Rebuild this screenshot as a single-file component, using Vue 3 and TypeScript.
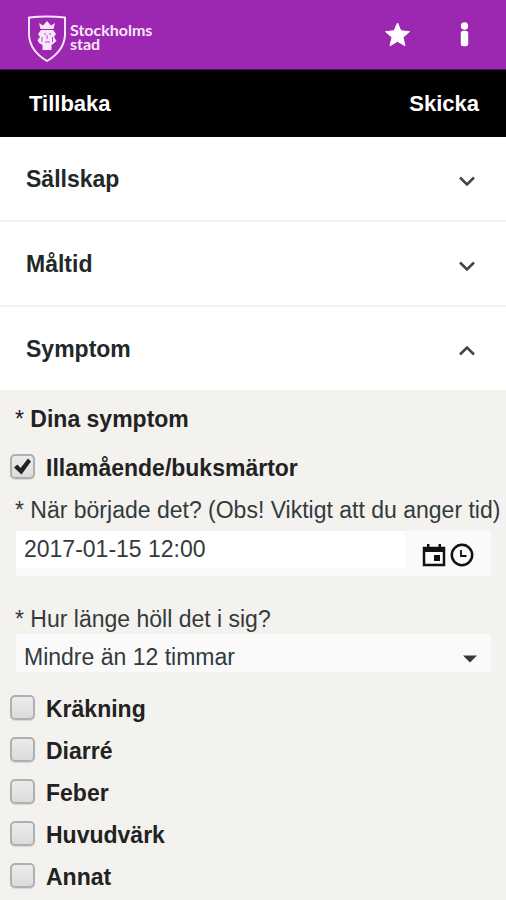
<script setup lang="ts">
import { reactive, ref } from 'vue'

interface Section {
  id: string
  title: string
  open: boolean
}

interface Symptom {
  id: string
  label: string
  checked: boolean
}

const sections: Section[] = [
  { id: 'company', title: 'Sällskap', open: false },
  { id: 'meal', title: 'Måltid', open: false },
  { id: 'symptom', title: 'Symptom', open: true },
]

const nausea = reactive<Symptom>({ id: 'nausea', label: 'Illamående/buksmärtor', checked: true })

const otherSymptoms = reactive<Symptom[]>([
  { id: 'vomiting', label: 'Kräkning', checked: false },
  { id: 'diarrhoea', label: 'Diarré', checked: false },
  { id: 'fever', label: 'Feber', checked: false },
  { id: 'headache', label: 'Huvudvärk', checked: false },
  { id: 'other', label: 'Annat', checked: false },
])

const startedAt = ref('2017-01-15 12:00')
const duration = ref('Mindre än 12 timmar')
</script>

<template>
  <div class="page">
    <header class="brand-bar">
      <a href="#" class="brand">
        <svg class="shield" viewBox="0 0 40 48" aria-hidden="true">
          <path d="M2 2.500 Q20 0.500 38 2.500 V20 Q37 36 20 46 Q3 36 2 20 Z" fill="none" stroke="currentColor" stroke-width="2" stroke-linejoin="round" />
          <path d="M12 8 L16 10.500 L20 6 L24 10.500 L28 8 L26.500 14 H13.500 Z" fill="currentColor" />
          <path d="M14 15 H26 L29 19 L27 22 L29.500 26 L26 29 L24.500 30 V35 H15.500 V30 L12 28 L10.500 25 L13 22 L11 19 Z" fill="currentColor" />
          <path d="M17 19 H19 M22 19 H24 M20 20 V24 M18 27 H23 M15 22 V27 M25.500 22 V27" fill="none" stroke="#9c27b0" stroke-width="0.800" />
        </svg>
        <span class="wordmark"><span>Stockholms</span><span>stad</span></span>
      </a>
      <nav class="brand-actions">
        <button type="button" class="icon-button" aria-label="Favoriter">
          <svg viewBox="0 0 28 28" width="28" height="28" aria-hidden="true">
            <path d="M14.500 2 L17.900 9.800 L26.500 10.600 L20 16.300 L22 24.800 L14.500 20.300 L7 24.800 L9 16.300 L2.500 10.600 L11.100 9.800 Z" fill="currentColor" stroke="currentColor" stroke-linejoin="round" />
          </svg>
        </button>
        <button type="button" class="icon-button" aria-label="Information">
          <svg viewBox="0 0 28 28" width="28" height="28" aria-hidden="true">
            <circle cx="14.500" cy="5" r="3.700" fill="currentColor" />
            <rect x="10.800" y="9.700" width="7.400" height="15.500" rx="2.500" fill="currentColor" />
          </svg>
        </button>
      </nav>
    </header>

    <div class="action-bar">
      <button type="button">Tillbaka</button>
      <button type="button">Skicka</button>
    </div>

    <main>
      <h2 v-for="section in sections" :key="section.id" class="section-heading">
        <button type="button" class="section-toggle" :aria-expanded="section.open">
          <span>{{ section.title }}</span>
          <svg viewBox="0 0 18 12" width="18" height="12" aria-hidden="true">
            <path :d="section.open ? 'M2 9.500 L9 2.500 L16 9.500' : 'M2 2.500 L9 9.500 L16 2.500'" fill="none" stroke="currentColor" stroke-width="2.500" />
          </svg>
        </button>
      </h2>

      <form class="panel" @submit.prevent>
        <h3 class="panel-title"><span class="star">*</span> Dina symptom</h3>

        <label class="check-row" :for="nausea.id">
          <span class="check-box">
            <input :id="nausea.id" v-model="nausea.checked" type="checkbox" />
            <svg viewBox="0 0 25 25" aria-hidden="true">
              <path d="M4 13.500 L7.500 10.500 L10.500 14 L18 4.500 L21 7.500 L11.500 20.500 Z" fill="currentColor" />
            </svg>
          </span>
          <span>{{ nausea.label }}</span>
        </label>

        <div class="field">
          <label for="started-at">* När började det? (Obs! Viktigt att du anger tid)</label>
          <div class="date-box">
            <input id="started-at" v-model="startedAt" type="text" />
            <button type="button" aria-label="Välj datum">
              <svg viewBox="0 0 24 24" width="24" height="24" aria-hidden="true">
                <path d="M2 5 H22 V22 H2 Z" fill="none" stroke="currentColor" stroke-width="2.500" />
                <path d="M1 4 H23 V9 H1 Z M5 1 H7.500 V5 H5 Z M16.500 1 H19 V5 H16.500 Z M12 12 H18 V18 H12 Z" fill="currentColor" />
              </svg>
            </button>
            <button type="button" aria-label="Välj tid">
              <svg viewBox="0 0 24 24" width="24" height="24" aria-hidden="true">
                <circle cx="12" cy="12" r="10.200" fill="none" stroke="currentColor" stroke-width="2.500" />
                <path d="M11 7 V13 H16.500" fill="none" stroke="currentColor" stroke-width="1.800" />
              </svg>
            </button>
          </div>
        </div>

        <div class="field duration">
          <label for="duration">* Hur länge höll det i sig?</label>
          <div class="select-box">
            <select id="duration" v-model="duration">
              <option>Mindre än 12 timmar</option>
            </select>
            <svg viewBox="0 0 14 8" width="14" height="8" aria-hidden="true">
              <path d="M0 0.500 H14 L7 7.500 Z" fill="currentColor" />
            </svg>
          </div>
        </div>

        <label v-for="symptom in otherSymptoms" :key="symptom.id" class="check-row" :for="symptom.id">
          <span class="check-box">
            <input :id="symptom.id" v-model="symptom.checked" type="checkbox" />
            <svg viewBox="0 0 25 25" aria-hidden="true">
              <path d="M4 13.500 L7.500 10.500 L10.500 14 L18 4.500 L21 7.500 L11.500 20.500 Z" fill="currentColor" />
            </svg>
          </span>
          <span>{{ symptom.label }}</span>
        </label>
      </form>
    </main>
  </div>
</template>

<style>
body {
  background: #f3f2ee;
}
</style>

<style scoped>
.page {
  font-family: "Liberation Sans", Arial, sans-serif;
  font-size: 23px;
  line-height: 28px;
  color: #222829;
}

button,
input,
select {
  font: inherit;
  color: inherit;
  border: 0;
  margin: 0;
  padding: 0;
  background: none;
}

svg {
  display: block;
}

.brand-bar {
  display: flex;
  align-items: center;
  justify-content: space-between;
  box-sizing: border-box;
  height: 70px;
  padding: 0 28px 0 27px;
  background: #9c27b0;
  border-bottom: 1px solid #4e1358;
  color: #fff;
}

.brand {
  display: flex;
  align-items: center;
  gap: 3px;
  padding-top: 8px;
  color: #f9e6fc;
  text-decoration: none;
}

.shield {
  width: 40px;
  height: 48px;
}

.wordmark {
  display: flex;
  flex-direction: column;
  padding-bottom: 3px;
  font: 700 16px/14px Lato, sans-serif;
}

.brand-actions {
  display: flex;
  gap: 39px;
}

.action-bar {
  display: flex;
  align-items: center;
  justify-content: space-between;
  height: 67px;
  padding: 0 27px 0 29px;
  background: #000;
  color: #fff;
}

.action-bar button {
  font-size: 22px;
  font-weight: 700;
}

.section-heading {
  margin: 0;
  font-size: 23px;
  background: #fff;
}

.section-heading + .section-heading {
  border-top: 2px solid #f3f2ee;
}

.section-toggle {
  display: flex;
  align-items: center;
  justify-content: space-between;
  width: 100%;
  height: 83px;
  padding: 0 30px 0 26px;
}

.section-toggle svg {
  margin-top: 4px;
  color: #444;
}

.panel {
  padding: 15px 15px 2px;
  background: #f3f2ee;
}

.panel-title {
  margin: 0 0 14px;
  font-size: 23px;
  color: #222;
}

.star {
  font-weight: 400;
}

.check-row {
  display: flex;
  align-items: center;
  gap: 11px;
  height: 42px;
  margin-left: -5px;
  font-weight: 700;
  color: #222;
}

.check-box {
  position: relative;
  width: 25px;
  height: 25px;
  margin-bottom: 3px;
}

.check-box input {
  appearance: none;
  display: block;
  box-sizing: border-box;
  width: 25px;
  height: 25px;
  border: 2px solid #b0b0b0;
  border-radius: 5px;
  background: linear-gradient(#ebebeb, #dcdcdc);
  box-shadow: 0 1px 1px #d8d8d4;
}

.check-box svg {
  position: absolute;
  inset: 0;
  display: none;
  pointer-events: none;
}

.check-box input:checked + svg {
  display: block;
}

.field {
  display: flex;
  flex-direction: column;
  gap: 7px;
  margin-top: 7px;
  color: #333a3c;
}

.field label {
  white-space: nowrap;
}

.date-box {
  display: flex;
  align-items: flex-start;
  gap: 4px;
  height: 45px;
  margin-left: 1px;
  padding-right: 17px;
  background: #fafafa;
}

.date-box input {
  flex: 1;
  min-width: 0;
  height: 37px;
  margin-right: 13px;
  padding-left: 8px;
  background: #fff;
}

.date-box button {
  margin-top: 12px;
  color: #111;
}

.duration {
  gap: 1px;
  margin-top: 29px;
  margin-bottom: 16px;
}

.select-box {
  position: relative;
  margin-left: 1px;
  background: #fafafa;
}

.select-box select {
  appearance: none;
  display: block;
  width: 100%;
  height: 38px;
  padding: 8px 40px 0 8px;
}

.select-box svg {
  position: absolute;
  right: 14px;
  top: 21px;
  pointer-events: none;
}
</style>
